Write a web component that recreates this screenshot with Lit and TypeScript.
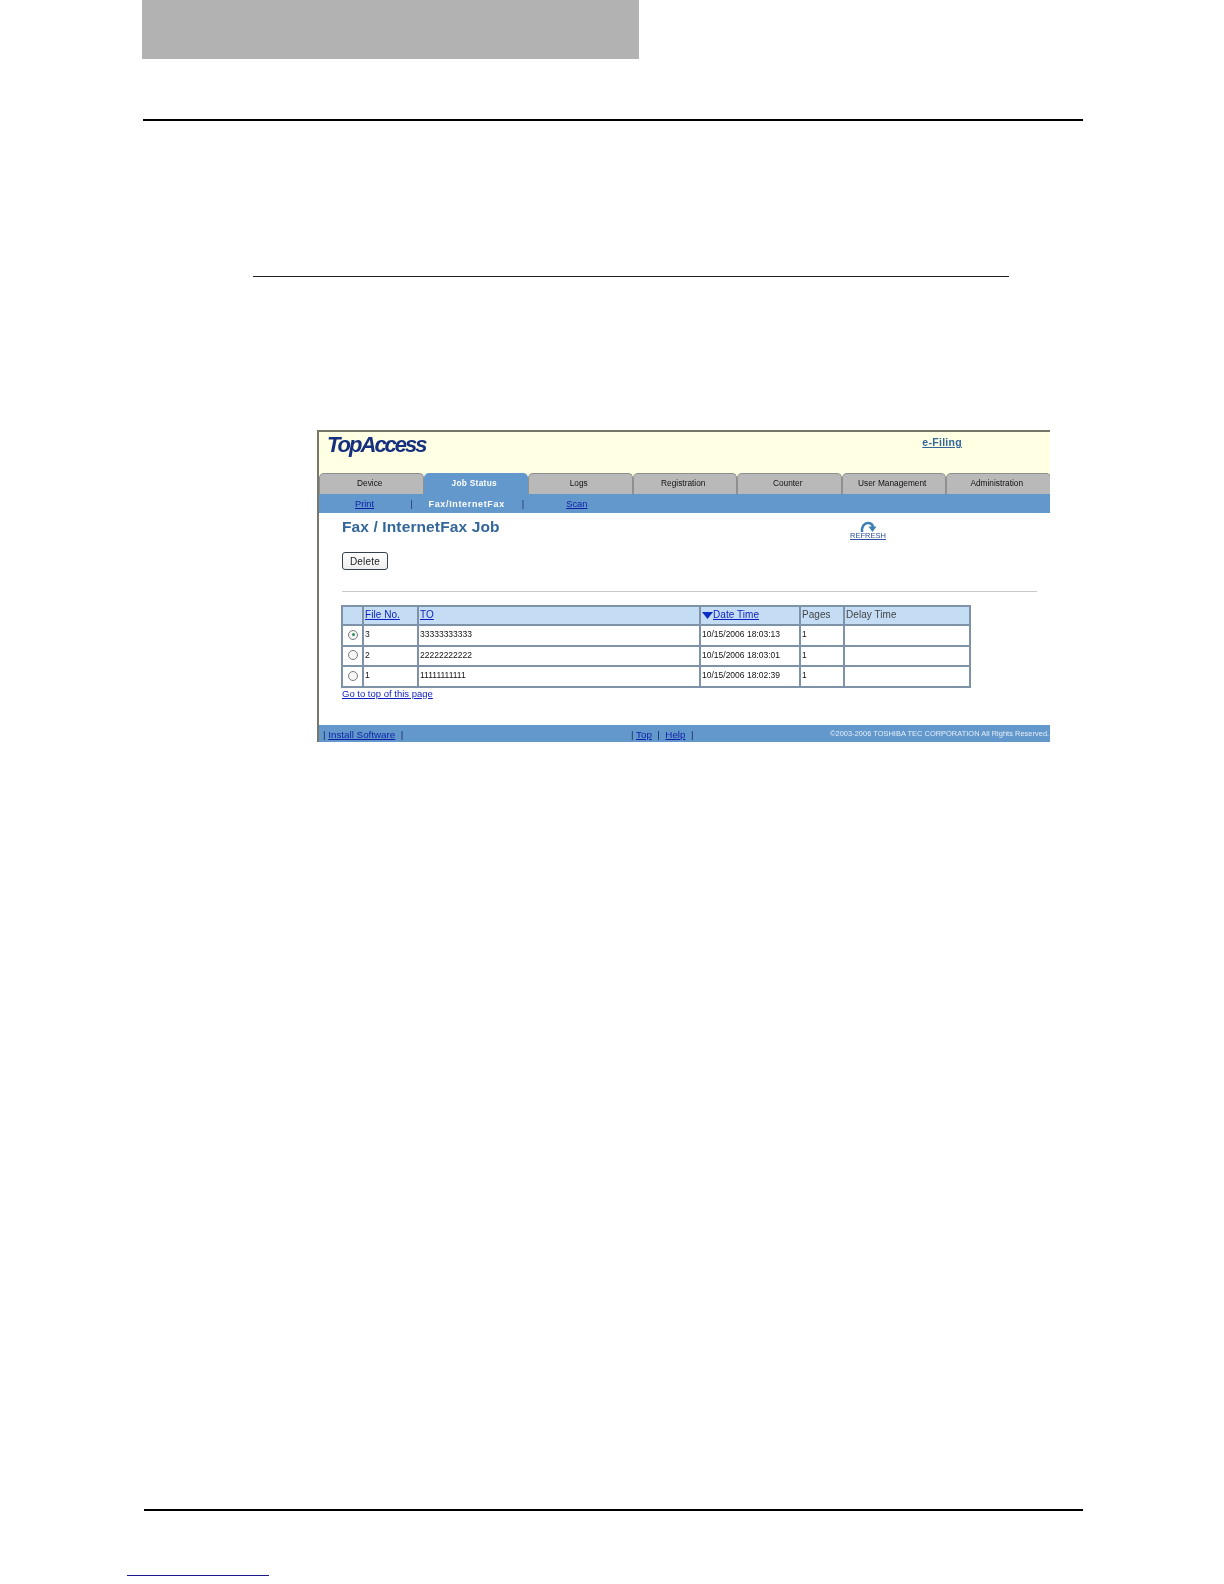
import { LitElement, html, css, svg } from "lit";
import { customElement } from "lit/decorators.js";

const tabs = ["Device", "Job Status", "Logs", "Registration", "Counter", "User Management", "Administration"];
const rows = [
  { no: "3", to: "33333333333", at: "10/15/2006 18:03:13", on: true },
  { no: "2", to: "22222222222", at: "10/15/2006 18:03:01", on: false },
  { no: "1", to: "11111111111", at: "10/15/2006 18:02:39", on: false },
];

@customElement("app-root")
export class AppRoot extends LitElement {
  static styles = css`
    :host { display: block; width: 1224px; height: 1584px; background: #fff; overflow: hidden; font-family: "Liberation Sans", Arial, sans-serif; }
    .page { display: flex; flex-direction: column; height: 1584px; }
    .chapter { width: 497px; height: 59px; margin-left: 142px; background: #b2b2b2; flex: none; }
    .rule-top { height: 2px; width: 940px; margin: 60px 0 0 143px; background: #000; flex: none; }
    .rule-mid { height: 1px; width: 756px; margin: 155px 0 0 253px; background: #222; flex: none; }
    .shot { width: 733px; height: 312px; margin: 153px 0 0 317px; box-sizing: border-box; border-top: 2px solid #77776a; border-left: 2px solid #77776a; flex: none; display: flex; flex-direction: column; overflow: hidden; filter: blur(0.35px); }
    .banner { height: 41px; background: #ffffe3; display: flex; justify-content: space-between; flex: none; }
    .logo { margin: 0 0 0 8px; font: italic bold 22px/26px "Liberation Sans", sans-serif; letter-spacing: -2px; color: #16307f; }
    .efiling { margin: 3px 88px 0 0; font: bold 10.5px/14px "Liberation Sans", sans-serif; letter-spacing: .3px; color: #336699; text-decoration: underline; }
    .tabs { display: grid; grid-template-columns: repeat(7, 104.5px); height: 21px; background: #ffffe3; flex: none; }
    .tab { box-sizing: border-box; background: #b9b9b9; border: 1px solid #8f8f8f; border-bottom: 0; border-radius: 5px 5px 0 0; padding-right: 3px; font-size: 8.3px; line-height: 18px; text-align: center; color: #111; }
    .tab.active { background: #6398cc; color: #fff; font-weight: bold; border-color: #6398cc; letter-spacing: .3px; }
    .subnav { height: 19px; background: #6398cc; display: flex; font-size: 9.3px; flex: none; align-items: center; }
    .subnav a { color: #0b1fa5; text-decoration: underline; }
    .subnav b { color: #fff; font-size: 9px; letter-spacing: .65px; }
    .subnav span { color: #1c3560; }
    .s1 { margin-left: 36px; } .s2 { margin-left: 36px; } .s3 { margin-left: 16px; } .s4 { margin-left: 17px; } .s5 { margin-left: 42px; }
    .content { flex: 1; padding: 0 0 0 23px; background: #fff; }
    .title-row { display: flex; height: 32px; }
    .title { margin: 4.5px 0 0 0; font: bold 15.5px/18px "Liberation Sans", sans-serif; color: #336699; letter-spacing: .12px; width: 508px; flex: none; }
    .refresh { margin-top: 8px; width: 36px; text-align: center; font-size: 7.5px; line-height: 8px; color: #2d4f9e; text-decoration: underline; white-space: nowrap; }
    .refresh svg { display: block; margin: 0 auto -1px; }
    .btn { display: block; box-sizing: border-box; width: 46px; height: 18px; margin-top: 7px; border: 1px solid #33434d; border-radius: 3px; background: linear-gradient(#fff, #eee); font: 10px/15px "Liberation Sans", sans-serif; letter-spacing: .2px; color: #222; padding: 0; text-align: center; }
    .sep { height: 1px; width: 695px; background: #c8c8c8; margin-top: 21px; }
    table { border-collapse: collapse; table-layout: fixed; width: 628px; margin: 13px 0 0 -1px; border: 2px solid #7f93a8; font-size: 8.5px; color: #111; }
    td, th { border: 2px solid #7f93a8; padding: 0 0 2px 1px; font-weight: normal; text-align: left; white-space: nowrap; overflow: hidden; }
    td { height: 16.5px; }
    th { height: 15px; background: #c4ddf5; font-size: 10px; letter-spacing: .05px; color: #444; }
    th a { color: #0b1fc0; text-decoration: underline; }
    th svg { vertical-align: -1px; }
    .radio { display: block; width: 10px; height: 10px; margin: 1px auto 0 4px; border: 1px solid #7a7a7a; border-radius: 50%; box-sizing: border-box; background: #f6f6f6; position: relative; }
    .radio.on::after { content: ""; position: absolute; left: 2.5px; top: 2.5px; width: 3px; height: 3px; border-radius: 50%; background: #2f8f5f; }
    .top-link { display: block; margin-top: 1px; font-size: 9.5px; line-height: 10px; color: #0b1fc0; text-decoration: underline; }
    .footer { height: 17px; background: #6398cc; display: flex; align-items: center; font-size: 9.8px; color: #12295a; flex: none; padding-left: 4px; }
    .footer a { color: #0b1fa5; text-decoration: underline; }
    .f1 { width: 308px; flex: none; padding-top: 1px; }
    .f2 { width: 199px; flex: none; padding-top: 1px; }
    .copy { font-size: 7.4px; color: #e6eef8; white-space: nowrap; letter-spacing: .05px; }
    .rule-bot { height: 2px; width: 939px; margin: 767px 0 0 144px; background: #000; flex: none; }
    .foot-link { height: 1px; width: 142px; margin: 64px 0 0 127px; background: #1a1a8c; flex: none; }
  `;

  render() {
    return html`<div class="page">
      <div class="chapter"></div>
      <div class="rule-top"></div>
      <div class="rule-mid"></div>
      <div class="shot">
        <div class="banner"><div class="logo">TopAccess</div><div class="efiling">e-Filing</div></div>
        <div class="tabs">${tabs.map((t) => html`<div class="tab ${t === "Job Status" ? "active" : ""}">${t}</div>`)}</div>
        <div class="subnav">
          <a class="s1">Print</a><span class="s2">|</span><b class="s3">Fax/InternetFax</b><span class="s4">|</span><a class="s5">Scan</a>
        </div>
        <div class="content">
          <div class="title-row">
            <div class="title">Fax / InternetFax Job</div>
            <div class="refresh">
              <svg width="18" height="12" viewBox="0 0 18 12">${svg`<path d="M3 11 C2.5 5 5.5 2 9 2 C11.5 2 13.5 3.5 14 6" fill="none" stroke="#3f7fb5" stroke-width="2.6"/><path d="M9.5 5.5 L17.5 5.5 L13.5 11 Z" fill="#3f7fb5"/>`}</svg>
              REFRESH
            </div>
          </div>
          <button class="btn">Delete</button>
          <div class="sep"></div>
          <table>
            <colgroup><col style="width:21px" /><col style="width:55px" /><col style="width:282px" /><col style="width:100px" /><col style="width:44px" /><col style="width:126px" /></colgroup>
            <tr>
              <th></th><th><a>File No.</a></th><th><a>TO</a></th>
              <th><svg width="11" height="7" viewBox="0 0 11 7">${svg`<path d="M0 0 H11 L5.5 7 Z" fill="#0b2fc0"/>`}</svg><a>Date Time</a></th>
              <th>Pages</th><th>Delay Time</th>
            </tr>
            ${rows.map((r) => html`<tr>
              <td><span class="radio ${r.on ? "on" : ""}"></span></td>
              <td>${r.no}</td><td>${r.to}</td><td>${r.at}</td><td>1</td><td></td>
            </tr>`)}
          </table>
          <a class="top-link">Go to top of this page</a>
        </div>
        <div class="footer">
          <div class="f1">| <a>Install Software</a> &nbsp;|</div>
          <div class="f2">| <a>Top</a> &nbsp;| &nbsp;<a>Help</a> &nbsp;|</div>
          <div class="copy">©2003-2006 TOSHIBA TEC CORPORATION All Rights Reserved.</div>
        </div>
      </div>
      <div class="rule-bot"></div>
      <div class="foot-link"></div>
    </div>`;
  }
}
